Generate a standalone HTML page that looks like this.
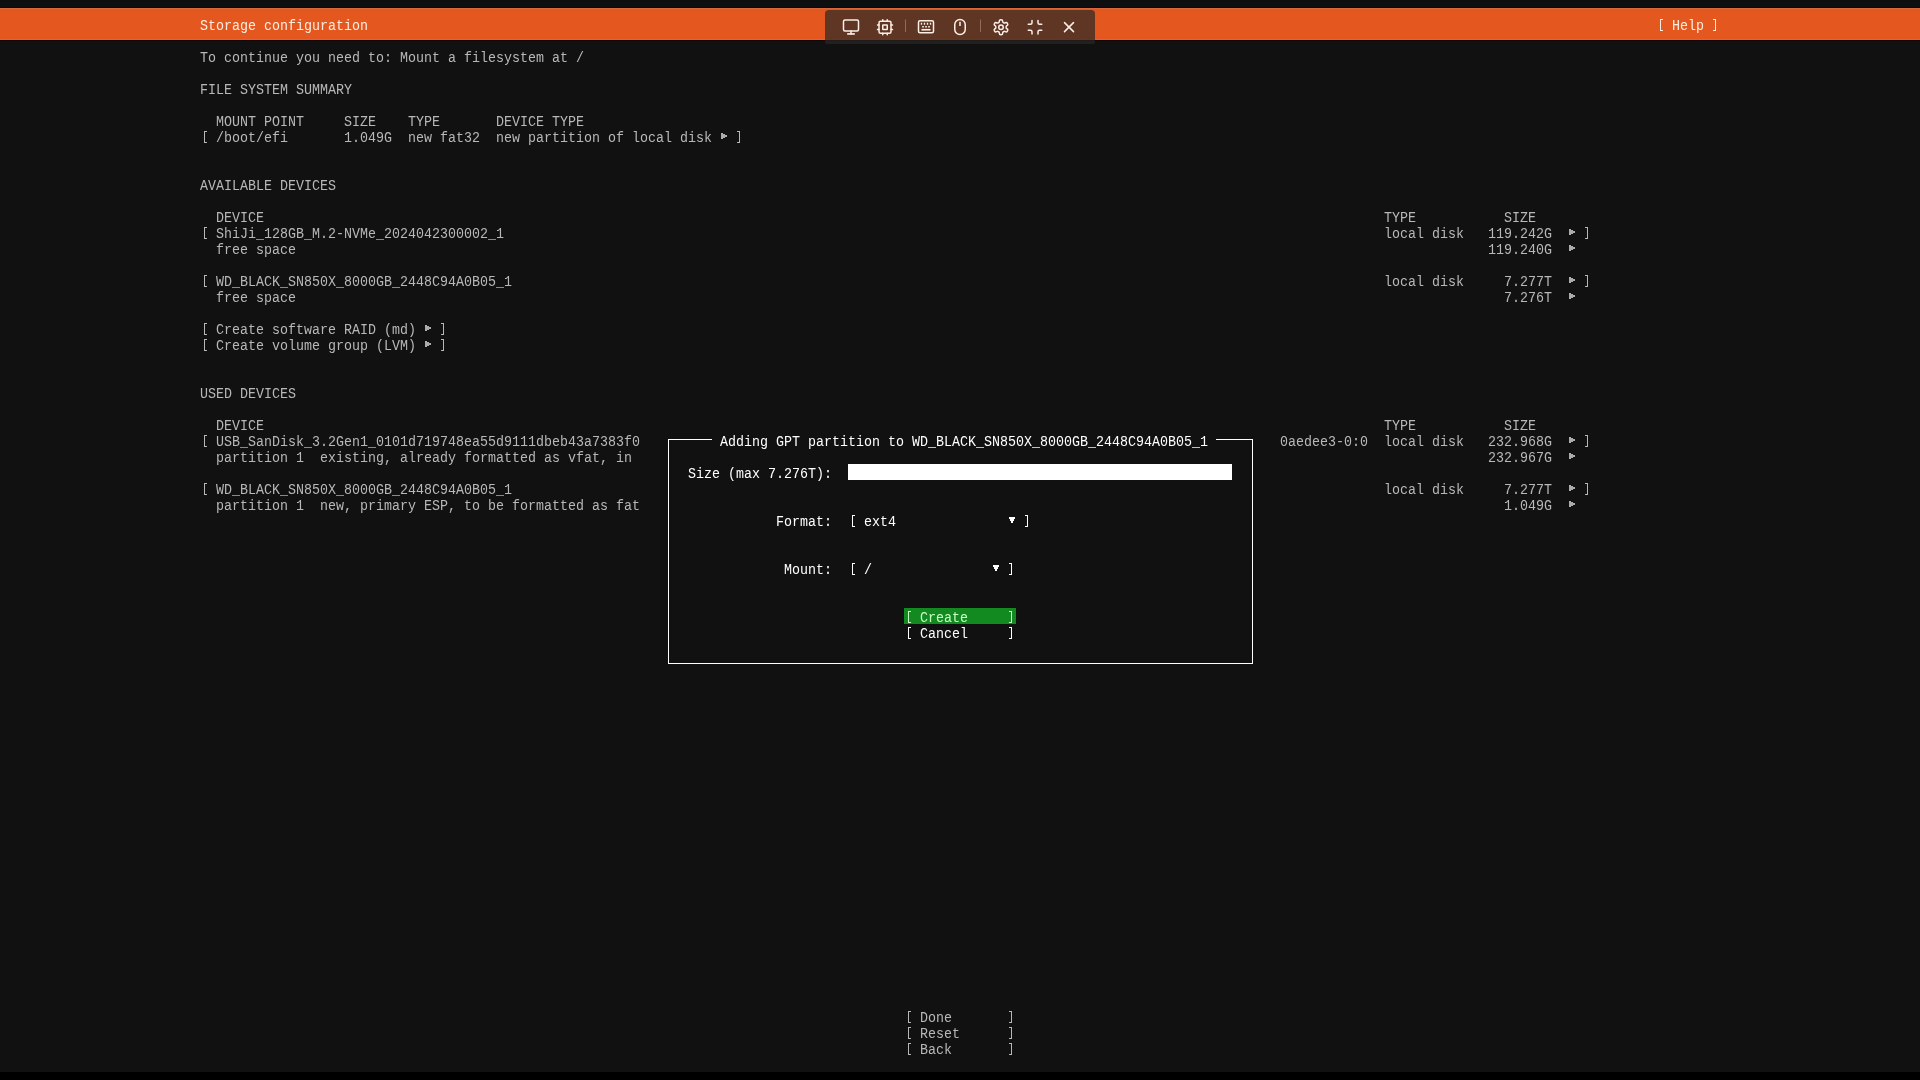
<!DOCTYPE html>
<html><head><meta charset="utf-8"><style>
html,body{margin:0;padding:0;width:1920px;height:1080px;overflow:hidden;background:#111111;}
#top{position:absolute;left:0;top:0;width:1920px;height:8px;background:#0c0e10}
#bot{position:absolute;left:0;top:1072px;width:1920px;height:8px;background:#000}
#hdr{position:absolute;left:0;top:8px;width:1920px;height:32px;background:#e4571f}
.t{position:absolute;height:16px;line-height:16px;white-space:pre;font-family:"Liberation Mono",monospace;font-size:13.3333px;transform:scaleY(1.125);transform-origin:0 0;margin-top:2px;will-change:transform}
.g{color:#b8b8b8}
.w{color:#ffffff}
.h{color:#fbeee0}
.lg{color:#c8ffc8}
.ar{position:absolute;display:block}
.bk{color:transparent}
#box{position:absolute;left:668px;top:439px;width:583px;height:223px;border:1px solid #fff}
#gap{position:absolute;left:712px;top:436px;width:504px;height:8px;background:#111111}
#inp{position:absolute;left:848px;top:464px;width:384px;height:16px;background:#fff}
#btn{position:absolute;left:904px;top:608px;width:112px;height:16px;background:#138a20}
</style></head><body>
<div id="top"></div><div id="hdr"></div><div id="bot"></div><div style="position:absolute;left:0;top:7px;width:1920px;height:1px;background:#170303"></div><div style="position:absolute;left:0;top:8px;width:1920px;height:1px;background:#dc6638"></div><div style="position:absolute;left:0;top:39px;width:1920px;height:1px;background:#dc6638"></div><div style="position:absolute;left:0;top:40px;width:1920px;height:1px;background:#140404"></div>
<div id="box"></div><div id="gap"></div><div id="inp"></div><div id="btn"></div>
<div class="t g" style="left:200px;top:48px">To continue you need to: Mount a filesystem at /</div>
<div class="t g" style="left:200px;top:80px">FILE SYSTEM SUMMARY</div>
<div class="t g" style="left:216px;top:112px">MOUNT POINT</div>
<div class="t g" style="left:344px;top:112px">SIZE</div>
<div class="t g" style="left:408px;top:112px">TYPE</div>
<div class="t g" style="left:496px;top:112px">DEVICE TYPE</div>
<svg class="ar" style="left:204px;top:131px" width="3" height="12"><path d="M0 0h3v1h-2v10h2v1h-3z" fill="#b8b8b8"/></svg>
<div class="t g" style="left:200px;top:128px"><span class="bk">[</span> /boot/efi</div>
<div class="t g" style="left:344px;top:128px">1.049G</div>
<div class="t g" style="left:408px;top:128px">new fat32</div>
<div class="t g" style="left:496px;top:128px">new partition of local disk</div>
<svg class="ar" style="left:737px;top:131px" width="3" height="12"><path d="M0 0h3v12h-3v-1h2v-10h-2z" fill="#b8b8b8"/></svg>
<div class="t g" style="left:736px;top:128px"><span class="bk">]</span></div>
<div class="t g" style="left:200px;top:176px">AVAILABLE DEVICES</div>
<div class="t g" style="left:216px;top:208px">DEVICE</div>
<div class="t g" style="left:1384px;top:208px">TYPE</div>
<div class="t g" style="left:1504px;top:208px">SIZE</div>
<svg class="ar" style="left:204px;top:227px" width="3" height="12"><path d="M0 0h3v1h-2v10h2v1h-3z" fill="#b8b8b8"/></svg>
<div class="t g" style="left:200px;top:224px"><span class="bk">[</span> ShiJi_128GB_M.2-NVMe_2024042300002_1</div>
<div class="t g" style="left:1384px;top:224px">local disk</div>
<div class="t g" style="left:1488px;top:224px">119.242G</div>
<svg class="ar" style="left:1585px;top:227px" width="3" height="12"><path d="M0 0h3v12h-3v-1h2v-10h-2z" fill="#b8b8b8"/></svg>
<div class="t g" style="left:1584px;top:224px"><span class="bk">]</span></div>
<div class="t g" style="left:216px;top:240px">free space</div>
<div class="t g" style="left:1488px;top:240px">119.240G</div>
<svg class="ar" style="left:204px;top:275px" width="3" height="12"><path d="M0 0h3v1h-2v10h2v1h-3z" fill="#b8b8b8"/></svg>
<div class="t g" style="left:200px;top:272px"><span class="bk">[</span> WD_BLACK_SN850X_8000GB_2448C94A0B05_1</div>
<div class="t g" style="left:1384px;top:272px">local disk</div>
<div class="t g" style="left:1504px;top:272px">7.277T</div>
<svg class="ar" style="left:1585px;top:275px" width="3" height="12"><path d="M0 0h3v12h-3v-1h2v-10h-2z" fill="#b8b8b8"/></svg>
<div class="t g" style="left:1584px;top:272px"><span class="bk">]</span></div>
<div class="t g" style="left:216px;top:288px">free space</div>
<div class="t g" style="left:1504px;top:288px">7.276T</div>
<svg class="ar" style="left:204px;top:323px" width="3" height="12"><path d="M0 0h3v1h-2v10h2v1h-3z" fill="#b8b8b8"/></svg>
<div class="t g" style="left:200px;top:320px"><span class="bk">[</span> Create software RAID (md)</div>
<svg class="ar" style="left:441px;top:323px" width="3" height="12"><path d="M0 0h3v12h-3v-1h2v-10h-2z" fill="#b8b8b8"/></svg>
<div class="t g" style="left:440px;top:320px"><span class="bk">]</span></div>
<svg class="ar" style="left:204px;top:339px" width="3" height="12"><path d="M0 0h3v1h-2v10h2v1h-3z" fill="#b8b8b8"/></svg>
<div class="t g" style="left:200px;top:336px"><span class="bk">[</span> Create volume group (LVM)</div>
<svg class="ar" style="left:441px;top:339px" width="3" height="12"><path d="M0 0h3v12h-3v-1h2v-10h-2z" fill="#b8b8b8"/></svg>
<div class="t g" style="left:440px;top:336px"><span class="bk">]</span></div>
<div class="t g" style="left:200px;top:384px">USED DEVICES</div>
<div class="t g" style="left:216px;top:416px">DEVICE</div>
<div class="t g" style="left:1384px;top:416px">TYPE</div>
<div class="t g" style="left:1504px;top:416px">SIZE</div>
<svg class="ar" style="left:204px;top:435px" width="3" height="12"><path d="M0 0h3v1h-2v10h2v1h-3z" fill="#b8b8b8"/></svg>
<div class="t g" style="left:200px;top:432px"><span class="bk">[</span> USB_SanDisk_3.2Gen1_0101d719748ea55d9111dbeb43a7383f0</div>
<div class="t g" style="left:1280px;top:432px">0aedee3-0:0</div>
<div class="t g" style="left:1384px;top:432px">local disk</div>
<div class="t g" style="left:1488px;top:432px">232.968G</div>
<svg class="ar" style="left:1585px;top:435px" width="3" height="12"><path d="M0 0h3v12h-3v-1h2v-10h-2z" fill="#b8b8b8"/></svg>
<div class="t g" style="left:1584px;top:432px"><span class="bk">]</span></div>
<div class="t g" style="left:216px;top:448px">partition 1  existing, already formatted as vfat, in</div>
<div class="t g" style="left:1488px;top:448px">232.967G</div>
<svg class="ar" style="left:204px;top:483px" width="3" height="12"><path d="M0 0h3v1h-2v10h2v1h-3z" fill="#b8b8b8"/></svg>
<div class="t g" style="left:200px;top:480px"><span class="bk">[</span> WD_BLACK_SN850X_8000GB_2448C94A0B05_1</div>
<div class="t g" style="left:1384px;top:480px">local disk</div>
<div class="t g" style="left:1504px;top:480px">7.277T</div>
<svg class="ar" style="left:1585px;top:483px" width="3" height="12"><path d="M0 0h3v12h-3v-1h2v-10h-2z" fill="#b8b8b8"/></svg>
<div class="t g" style="left:1584px;top:480px"><span class="bk">]</span></div>
<div class="t g" style="left:216px;top:496px">partition 1  new, primary ESP, to be formatted as fat</div>
<div class="t g" style="left:1504px;top:496px">1.049G</div>
<div class="t w" style="left:720px;top:432px">Adding GPT partition to WD_BLACK_SN850X_8000GB_2448C94A0B05_1</div>
<div class="t w" style="left:688px;top:464px">Size (max 7.276T):</div>
<div class="t w" style="left:776px;top:512px">Format:</div>
<svg class="ar" style="left:852px;top:515px" width="3" height="12"><path d="M0 0h3v1h-2v10h2v1h-3z" fill="#ffffff"/></svg>
<div class="t w" style="left:848px;top:512px"><span class="bk">[</span> ext4</div>
<svg class="ar" style="left:1025px;top:515px" width="3" height="12"><path d="M0 0h3v12h-3v-1h2v-10h-2z" fill="#ffffff"/></svg>
<div class="t w" style="left:1024px;top:512px"><span class="bk">]</span></div>
<div class="t w" style="left:784px;top:560px">Mount:</div>
<svg class="ar" style="left:852px;top:563px" width="3" height="12"><path d="M0 0h3v1h-2v10h2v1h-3z" fill="#ffffff"/></svg>
<div class="t w" style="left:848px;top:560px"><span class="bk">[</span> /</div>
<svg class="ar" style="left:1009px;top:563px" width="3" height="12"><path d="M0 0h3v12h-3v-1h2v-10h-2z" fill="#ffffff"/></svg>
<div class="t w" style="left:1008px;top:560px"><span class="bk">]</span></div>
<svg class="ar" style="left:908px;top:611px" width="3" height="12"><path d="M0 0h3v1h-2v10h2v1h-3z" fill="#c8ffc8"/></svg>
<svg class="ar" style="left:1009px;top:611px" width="3" height="12"><path d="M0 0h3v12h-3v-1h2v-10h-2z" fill="#c8ffc8"/></svg>
<div class="t lg" style="left:904px;top:608px"><span class="bk">[</span> Create     <span class="bk">]</span></div>
<svg class="ar" style="left:908px;top:627px" width="3" height="12"><path d="M0 0h3v1h-2v10h2v1h-3z" fill="#ffffff"/></svg>
<svg class="ar" style="left:1009px;top:627px" width="3" height="12"><path d="M0 0h3v12h-3v-1h2v-10h-2z" fill="#ffffff"/></svg>
<div class="t w" style="left:904px;top:624px"><span class="bk">[</span> Cancel     <span class="bk">]</span></div>
<svg class="ar" style="left:908px;top:1011px" width="3" height="12"><path d="M0 0h3v1h-2v10h2v1h-3z" fill="#b8b8b8"/></svg>
<svg class="ar" style="left:1009px;top:1011px" width="3" height="12"><path d="M0 0h3v12h-3v-1h2v-10h-2z" fill="#b8b8b8"/></svg>
<div class="t g" style="left:904px;top:1008px"><span class="bk">[</span> Done       <span class="bk">]</span></div>
<svg class="ar" style="left:908px;top:1027px" width="3" height="12"><path d="M0 0h3v1h-2v10h2v1h-3z" fill="#b8b8b8"/></svg>
<svg class="ar" style="left:1009px;top:1027px" width="3" height="12"><path d="M0 0h3v12h-3v-1h2v-10h-2z" fill="#b8b8b8"/></svg>
<div class="t g" style="left:904px;top:1024px"><span class="bk">[</span> Reset      <span class="bk">]</span></div>
<svg class="ar" style="left:908px;top:1043px" width="3" height="12"><path d="M0 0h3v1h-2v10h2v1h-3z" fill="#b8b8b8"/></svg>
<svg class="ar" style="left:1009px;top:1043px" width="3" height="12"><path d="M0 0h3v12h-3v-1h2v-10h-2z" fill="#b8b8b8"/></svg>
<div class="t g" style="left:904px;top:1040px"><span class="bk">[</span> Back       <span class="bk">]</span></div>
<div class="t h" style="left:200px;top:16px">Storage configuration</div>
<svg class="ar" style="left:1660px;top:19px" width="3" height="12"><path d="M0 0h3v1h-2v10h2v1h-3z" fill="#fbeee0"/></svg>
<svg class="ar" style="left:1713px;top:19px" width="3" height="12"><path d="M0 0h3v12h-3v-1h2v-10h-2z" fill="#fbeee0"/></svg>
<div class="t h" style="left:1656px;top:16px"><span class="bk">[</span> Help <span class="bk">]</span></div>
<svg class="ar" style="left:721px;top:133px" width="6" height="6"><path d="M0 0h2v6h-2zM2 1h2v4h-2zM4 2h2v2h-2z" fill="#ababab"/></svg>
<svg class="ar" style="left:1569px;top:229px" width="6" height="6"><path d="M0 0h2v6h-2zM2 1h2v4h-2zM4 2h2v2h-2z" fill="#ababab"/></svg>
<svg class="ar" style="left:1569px;top:245px" width="6" height="6"><path d="M0 0h2v6h-2zM2 1h2v4h-2zM4 2h2v2h-2z" fill="#ababab"/></svg>
<svg class="ar" style="left:1569px;top:277px" width="6" height="6"><path d="M0 0h2v6h-2zM2 1h2v4h-2zM4 2h2v2h-2z" fill="#ababab"/></svg>
<svg class="ar" style="left:1569px;top:293px" width="6" height="6"><path d="M0 0h2v6h-2zM2 1h2v4h-2zM4 2h2v2h-2z" fill="#ababab"/></svg>
<svg class="ar" style="left:425px;top:325px" width="6" height="6"><path d="M0 0h2v6h-2zM2 1h2v4h-2zM4 2h2v2h-2z" fill="#ababab"/></svg>
<svg class="ar" style="left:425px;top:341px" width="6" height="6"><path d="M0 0h2v6h-2zM2 1h2v4h-2zM4 2h2v2h-2z" fill="#ababab"/></svg>
<svg class="ar" style="left:1569px;top:437px" width="6" height="6"><path d="M0 0h2v6h-2zM2 1h2v4h-2zM4 2h2v2h-2z" fill="#ababab"/></svg>
<svg class="ar" style="left:1569px;top:453px" width="6" height="6"><path d="M0 0h2v6h-2zM2 1h2v4h-2zM4 2h2v2h-2z" fill="#ababab"/></svg>
<svg class="ar" style="left:1569px;top:485px" width="6" height="6"><path d="M0 0h2v6h-2zM2 1h2v4h-2zM4 2h2v2h-2z" fill="#ababab"/></svg>
<svg class="ar" style="left:1569px;top:501px" width="6" height="6"><path d="M0 0h2v6h-2zM2 1h2v4h-2zM4 2h2v2h-2z" fill="#ababab"/></svg>
<svg class="ar" style="left:1009px;top:517px" width="6" height="6"><path d="M0 0h6v2h-6zM1 2h4v2h-4zM2 4h2v2h-2z" fill="#ffffff"/></svg>
<svg class="ar" style="left:993px;top:565px" width="6" height="6"><path d="M0 0h6v2h-6zM1 2h4v2h-4zM2 4h2v2h-2z" fill="#ffffff"/></svg>
<div id="tb" style="position:absolute;left:825px;top:10px;width:270px;height:34px;border-radius:4px 4px 2px 2px;background:rgba(38,38,37,0.7)"></div>
<svg style="position:absolute;left:0;top:0" width="1920" height="60" viewBox="0 0 1920 60">
<g fill="none" stroke="#fbefe8" stroke-width="2" stroke-linecap="round" stroke-linejoin="round">
 <g transform="translate(842,17.75) scale(0.75)">
  <rect x="2" y="3" width="20" height="14.8" rx="2"/><path d="M8 21.6h8" stroke-linecap="square" stroke-width="2.2"/><path d="M12 17.8v3.8"/>
 </g>
 <g transform="translate(876,18.35) scale(0.75)">
  <rect x="4" y="4" width="16" height="16" rx="2"/><rect x="9" y="9" width="6" height="6" rx="0.5"/>
  <path d="M15 2v2M15 20v2M2 15h2M2 9h2M20 15h2M20 9h2M9 2v2M9 20v2"/>
 </g>
 <g transform="translate(917,17.75) scale(0.75)">
  <path d="M10 7.5v1M14 7.5v1M18 7.5v1M6 7.5v1" stroke-linecap="square" stroke-width="1.8"/><path d="M12 12h.01M16 12h.01M8 12h.01" stroke-linecap="square" stroke-width="2.2"/><path d="M7 16h10" stroke-linecap="square" stroke-width="2.2"/>
  <rect x="2" y="4" width="20" height="16" rx="2"/>
 </g>
 <g transform="translate(951,17.75) scale(0.75)">
  <rect x="5" y="2.3" width="14" height="20" rx="7"/><path d="M12 6.4v3.6" stroke-linecap="square"/>
 </g>
 <g transform="translate(992,18.2) scale(0.75)">
  <path d="M12.22 2h-.44a2 2 0 0 0-2 2v.18a2 2 0 0 1-1 1.73l-.43.25a2 2 0 0 1-2 0l-.15-.08a2 2 0 0 0-2.73.73l-.22.38a2 2 0 0 0 .73 2.73l.15.1a2 2 0 0 1 1 1.72v.51a2 2 0 0 1-1 1.74l-.15.09a2 2 0 0 0-.73 2.73l.22.38a2 2 0 0 0 2.73.73l.15-.08a2 2 0 0 1 2 0l.43.25a2 2 0 0 1 1 1.73V20a2 2 0 0 0 2 2h.44a2 2 0 0 0 2-2v-.18a2 2 0 0 1 1-1.73l.43-.25a2 2 0 0 1 2 0l.15.08a2 2 0 0 0 2.73-.73l.22-.39a2 2 0 0 0-.73-2.73l-.15-.08a2 2 0 0 1-1-1.74v-.5a2 2 0 0 1 1-1.74l.15-.09a2 2 0 0 0 .73-2.73l-.22-.38a2 2 0 0 0-2.73-.73l-.15.08a2 2 0 0 1-2 0l-.43-.25a2 2 0 0 1-1-1.73V4a2 2 0 0 0-2-2z"/>
  <circle cx="12" cy="12" r="3"/>
 </g>
 <g transform="translate(1026,18.2) scale(0.75)">
  <path d="M8 3v3a2 2 0 0 1-2 2H3"/><path d="M21 8h-3a2 2 0 0 1-2-2V3"/><path d="M3 16h3a2 2 0 0 1 2 2v3"/><path d="M16 21v-3a2 2 0 0 1 2-2h3"/>
 </g>
 <g transform="translate(1060,18.1) scale(0.75)">
  <path d="M18 6 6 18"/><path d="m6 6 12 12"/>
 </g>
</g>
<rect x="905" y="19.5" width="1" height="12.5" fill="rgba(255,235,225,0.3)"/>
<rect x="980" y="19.5" width="1" height="12.5" fill="rgba(255,235,225,0.3)"/>
</svg>

</body></html>
